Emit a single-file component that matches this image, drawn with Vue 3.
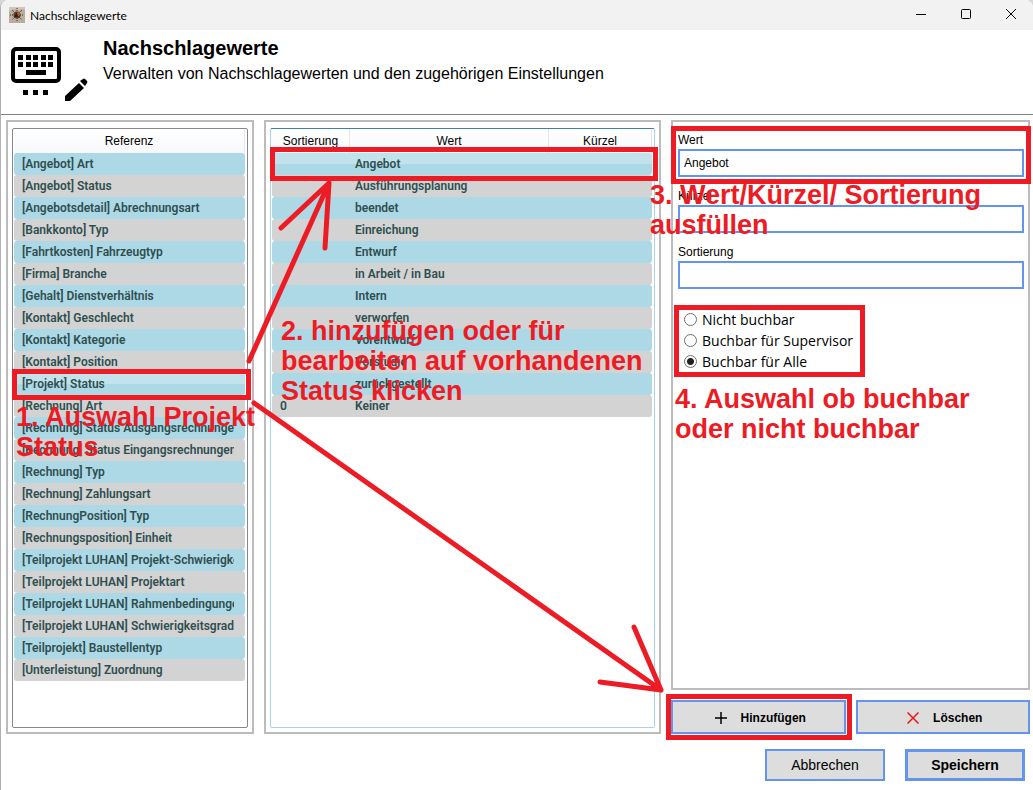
<script setup>
import { ref } from 'vue'

const references = [
  '[Angebot] Art',
  '[Angebot] Status',
  '[Angebotsdetail] Abrechnungsart',
  '[Bankkonto] Typ',
  '[Fahrtkosten] Fahrzeugtyp',
  '[Firma] Branche',
  '[Gehalt] Dienstverhältnis',
  '[Kontakt] Geschlecht',
  '[Kontakt] Kategorie',
  '[Kontakt] Position',
  '[Projekt] Status',
  '[Rechnung] Art',
  '[Rechnung] Status Ausgangsrechnungen',
  '[Rechnung] Status Eingangsrechnungen',
  '[Rechnung] Typ',
  '[Rechnung] Zahlungsart',
  '[RechnungPosition] Typ',
  '[Rechnungsposition] Einheit',
  '[Teilprojekt LUHAN] Projekt-Schwierigkeit',
  '[Teilprojekt LUHAN] Projektart',
  '[Teilprojekt LUHAN] Rahmenbedingungen',
  '[Teilprojekt LUHAN] Schwierigkeitsgrad',
  '[Teilprojekt] Baustellentyp',
  '[Unterleistung] Zuordnung',
]

const values = [
  { sort: '', name: 'Angebot' },
  { sort: '', name: 'Ausführungsplanung' },
  { sort: '', name: 'beendet' },
  { sort: '', name: 'Einreichung' },
  { sort: '', name: 'Entwurf' },
  { sort: '', name: 'in Arbeit / in Bau' },
  { sort: '', name: 'Intern' },
  { sort: '', name: 'verworfen' },
  { sort: '', name: 'Vorentwurf' },
  { sort: '', name: 'Vorstudie' },
  { sort: '', name: 'zurückgestellt' },
  { sort: '0', name: 'Keiner' },
]

const options = ['Nicht buchbar', 'Buchbar für Supervisor', 'Buchbar für Alle']

const selectedReference = ref('[Projekt] Status')
const selectedValue = ref('Angebot')
const wert = ref('Angebot')
const kuerzel = ref('')
const sortierung = ref('')
const bookable = ref('Buchbar für Alle')
</script>

<template>
  <div class="window">
    <div class="titlebar">
      <svg class="app-icon" viewBox="0 0 16 16" aria-hidden="true">
        <rect width="16" height="16" fill="#b9ad9c" />
        <path d="M0 0h16v3l-3-1-3 1-4-1-6 2z" fill="#cfc6b8" />
        <g stroke="#3a302a" stroke-width="1" stroke-dasharray="1 1">
          <path d="M8 1v14M1 8h14M3 3l10 10M13 3L3 13" />
        </g>
        <circle cx="8" cy="8" r="3.6" fill="#5d3a26" />
        <circle cx="9" cy="7" r="2" fill="#a8622f" />
        <path d="M5 10l3-5 1 5z" fill="#2c211d" />
      </svg>
      <span class="caption">Nachschlagewerte</span>
      <div class="window-buttons">
        <button type="button" aria-label="Minimieren">
          <svg viewBox="0 0 12 12"><path d="M1 6.5h10" /></svg>
        </button>
        <button type="button" aria-label="Maximieren">
          <svg viewBox="0 0 12 12"><rect x="1.5" y="1.5" width="9" height="9" rx="1" /></svg>
        </button>
        <button type="button" aria-label="Schließen">
          <svg viewBox="0 0 12 12"><path d="M1 1l10 10M11 1L1 11" /></svg>
        </button>
      </div>
    </div>

    <header class="header">
      <svg class="header-icon" viewBox="0 0 80 58" aria-hidden="true">
        <rect x="2" y="2" width="46" height="32" rx="3" fill="#fff" stroke="#000" stroke-width="4" />
        <path
          d="M7 8h5v5h-5zM15 8h5v5h-5zM22 8h5v5h-5zM30 8h5v5h-5zM37 8h5v5h-5zM7 15h5v5h-5zM15 15h5v5h-5zM22 15h5v5h-5zM30 15h5v5h-5zM37 15h5v5h-5zM15 23h20v5h-20zM12 43h5v5h-5zM22 43h5v5h-5zM32 43h5v5h-5z"
        />
        <path d="M54 54v-5l14-13 5 5-14 13zM69 34l3-2q1-1 2 0l2 2q1 1 0 2l-2 3z" />
      </svg>
      <div>
        <h1>Nachschlagewerte</h1>
        <p>Verwalten von Nachschlagewerten und den zugehörigen Einstellungen</p>
      </div>
    </header>

    <main class="body">
      <section class="panel">
        <div class="list">
          <table>
            <thead>
              <tr><th>Referenz</th></tr>
            </thead>
            <tbody>
              <tr
                v-for="item in references"
                :key="item"
                :class="{ selected: item === selectedReference }"
                @click="selectedReference = item"
              >
                <td><div class="clip">{{ item }}</div></td>
              </tr>
            </tbody>
          </table>
        </div>
      </section>

      <section class="panel">
        <div class="list active">
          <table>
            <colgroup>
              <col class="col-sort" />
              <col />
              <col class="col-short" />
            </colgroup>
            <thead>
              <tr>
                <th>Sortierung</th>
                <th>Wert</th>
                <th>Kürzel</th>
              </tr>
            </thead>
            <tbody>
              <tr
                v-for="item in values"
                :key="item.name"
                :class="{ selected: item.name === selectedValue }"
                @click="selectedValue = item.name"
              >
                <td>{{ item.sort }}</td>
                <td class="name">{{ item.name }}</td>
                <td></td>
              </tr>
            </tbody>
          </table>
        </div>
      </section>

      <div class="detail">
        <section class="panel form">
          <label for="wert">Wert</label>
          <input id="wert" v-model="wert" type="text" />
          <label for="kuerzel">Kürzel</label>
          <input id="kuerzel" v-model="kuerzel" type="text" />
          <label for="sortierung">Sortierung</label>
          <input id="sortierung" v-model="sortierung" type="text" />
          <div class="radios" role="radiogroup" aria-label="Buchbarkeit">
            <label v-for="option in options" :key="option" class="radio">
              <input v-model="bookable" type="radio" name="bookable" :value="option" />
              {{ option }}
            </label>
          </div>
        </section>
        <div class="actions">
          <button type="button" class="button">
            <svg viewBox="0 0 12 12" aria-hidden="true"><path d="M6 0v12M0 6h12" stroke="#000" stroke-width="1.5" /></svg>
            Hinzufügen
          </button>
          <button type="button" class="button">
            <svg viewBox="0 0 12 12" aria-hidden="true"><path d="M0.5 0.5l11 11M11.5 0.5l-11 11" stroke="#f01414" stroke-width="1.5" /></svg>
            Löschen
          </button>
        </div>
      </div>
    </main>

    <footer class="footer">
      <button type="button" class="button plain">Abbrechen</button>
      <button type="button" class="button primary">Speichern</button>
    </footer>

    <div class="notes">
      <svg class="marks" width="1033" height="790" aria-hidden="true">
        <rect x="14.5" y="371.5" width="234" height="26" />
        <rect x="272.5" y="149.5" width="383" height="29" />
        <rect x="673.5" y="128.5" width="355" height="53" />
        <rect x="676.5" y="307.5" width="186" height="67" />
        <rect x="668.5" y="696.5" width="181" height="41" />
        <path d="M249 361L329 183M281 228L329 183L325 248" />
        <path d="M254 403L661 690M634 627L661 690L600 682" />
      </svg>
      <p class="note one">1. Auswahl Projekt<br />Status</p>
      <p class="note two">2. hinzufügen oder für<br />bearbeiten auf vorhandenen<br />Status klicken</p>
      <p class="note three">3. Wert/Kürzel/ Sortierung<br />ausfüllen</p>
      <p class="note four">4. Auswahl ob buchbar<br />oder nicht buchbar</p>
    </div>
  </div>
</template>

<style>
body {
  margin: 0;
  background: #d8d8d8;
}
</style>

<style scoped>
* {
  box-sizing: border-box;
}

.window {
  position: relative;
  display: flex;
  flex-direction: column;
  min-height: 100vh;
  overflow: hidden;
  background: #fff;
  border-left: 1px solid #b0b0b0;
  border-radius: 8px 8px 0 0;
  color: #000;
  font-family: "Liberation Sans", Arial, sans-serif;
  font-size: 12px;
}

.titlebar {
  display: flex;
  align-items: center;
  height: 30px;
  padding-left: 8px;
  background: #f2f2f2;
}

.app-icon {
  width: 16px;
  height: 16px;
  margin-right: 5px;
}

.caption {
  flex: 1;
  font-family: Lato, "Open Sans", sans-serif;
  font-size: 12px;
}

.window-buttons {
  display: flex;
  align-self: flex-start;
  gap: 1px;
}

.window-buttons button {
  display: grid;
  place-items: center;
  width: 44px;
  height: 28px;
  padding: 0;
  background: none;
  border: 0;
}

.window-buttons svg {
  width: 12px;
  height: 12px;
  fill: none;
  stroke: #000;
}

.header {
  display: flex;
  gap: 12px;
  height: 85px;
  padding: 6px 10px 0;
  border-bottom: 1px solid #808080;
}

.header-icon {
  width: 80px;
  height: 58px;
  margin-top: 11px;
}

h1 {
  margin: 0;
  font-size: 20px;
  line-height: 24px;
}

.header p {
  margin: 4px 0 0;
  font-size: 16px;
  line-height: 20px;
}

.body {
  display: grid;
  flex: 1;
  grid-template-columns: 248px minmax(0, 397fr) minmax(0, 359fr);
  gap: 10px;
  padding: 5px 3px 0 5px;
}

.panel {
  display: flex;
  flex-direction: column;
  padding: 6px 4px 4px;
  border: 2px solid #bcbcbc;
}

.list {
  flex: 1;
  padding: 0 2px 0 1px;
  border: 1px solid #828790;
  border-radius: 2px;
}

.list.active {
  border-color: #3c7fb1 #a9d2ea #a9d2ea #a9d2ea;
}

table {
  width: 100%;
  border-spacing: 0;
  table-layout: fixed;
}

.col-sort {
  width: 78px;
}

.col-short {
  width: 103px;
}

th {
  height: 24px;
  padding: 0;
  border-right: 1px solid #e6e6e6;
  background: linear-gradient(#fff, #f7f8fa);
  font-weight: normal;
}

td {
  height: 22px;
  padding: 1px 11px 0 8px;
  background: #d3d3d3;
  color: #2f4f4f;
  font-family: Roboto, "Open Sans", sans-serif;
  font-size: 12px;
  font-weight: 600;
  line-height: 21px;
  white-space: nowrap;
}

td.name {
  padding-left: 5px;
}

td:first-child {
  border-radius: 3px 0 0 3px;
}

td:last-child {
  border-radius: 0 3px 3px 0;
}

td:only-child {
  border-radius: 3px;
}

tr:nth-child(odd) td {
  background: #add8e6;
}

tr.selected td {
  background: linear-gradient(#c2e3ec 50%, #add8e6 50%);
}

.clip {
  overflow: hidden;
}

.detail {
  display: flex;
  flex-direction: column;
  gap: 10px;
}

.form {
  flex: 1;
  padding: 10px 4px 0 5px;
}

.form > label {
  line-height: 16px;
}

input[type="text"] {
  width: 100%;
  height: 28px;
  margin: 1px 0 11px;
  padding: 0 4px;
  background: #fff;
  border: 2px solid #6495ed;
  color: #000;
  font: inherit;
}

.radios {
  display: flex;
  flex-direction: column;
  padding: 9px 6px;
}

.radio {
  display: flex;
  align-items: center;
  gap: 5px;
  height: 21px;
  font-family: "Open Sans", "Noto Sans", sans-serif;
  font-size: 14px;
}

input[type="radio"] {
  width: 13px;
  height: 13px;
  margin: 0;
  appearance: none;
  background: #fff;
  border: 1px solid #707070;
  border-radius: 50%;
}

input[type="radio"]:checked {
  background: radial-gradient(circle, #212121 3px, #fff 4px);
}

.actions {
  display: grid;
  grid-template-columns: 1fr 1fr;
  gap: 10px;
}

.button {
  display: flex;
  align-items: center;
  justify-content: center;
  gap: 14px;
  height: 34px;
  padding: 0;
  background: #ddd;
  border: 2px solid #6495ed;
  color: #000;
  font-family: inherit;
  font-size: 12px;
  font-weight: bold;
}

.actions .button {
  padding: 2px 0 0 4px;
}

.button svg {
  width: 12px;
  height: 12px;
}

.footer {
  display: flex;
  justify-content: flex-end;
  gap: 20px;
  padding: 15px 8px 9px;
}

.footer .button {
  width: 120px;
  height: 32px;
  font-size: 14px;
}

.footer .plain {
  font-weight: normal;
}

.footer .primary {
  border-width: 3px;
}

.notes {
  position: absolute;
  top: 0;
  left: -1px;
  color: #ed1c24;
  pointer-events: none;
}

.marks {
  display: block;
  fill: none;
  stroke: #ed1c24;
  stroke-width: 5;
}

.marks path {
  stroke-linecap: round;
  stroke-linejoin: round;
}

.note {
  position: absolute;
  margin: 0;
  font-size: 27px;
  font-weight: bold;
  line-height: 30px;
  white-space: nowrap;
}

.one {
  top: 402px;
  left: 16px;
}

.two {
  top: 316px;
  left: 281px;
}

.three {
  top: 180px;
  left: 650px;
}

.four {
  top: 384px;
  left: 675px;
}
</style>
